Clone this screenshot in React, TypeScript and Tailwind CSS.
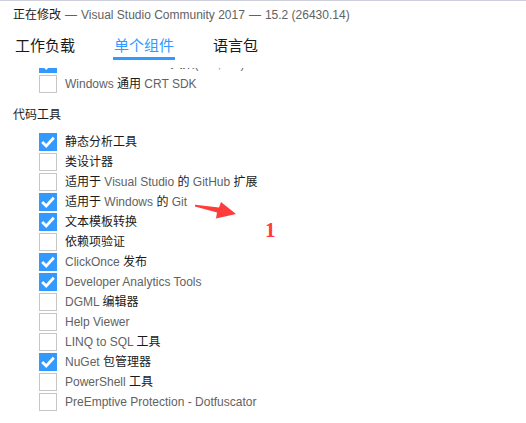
import React from 'react';

const FONT = { fontFamily: '"Liberation Sans", "Noto Sans CJK SC", sans-serif' };

interface Item {
  label: string;
  checked: boolean;
}

const items: Item[] = [
  { label: '静态分析工具', checked: true },
  { label: '类设计器', checked: false },
  { label: '适用于 Visual Studio 的 GitHub 扩展', checked: false },
  { label: '适用于 Windows 的 Git', checked: true },
  { label: '文本模板转换', checked: true },
  { label: '依赖项验证', checked: false },
  { label: 'ClickOnce 发布', checked: true },
  { label: 'Developer Analytics Tools', checked: true },
  { label: 'DGML 编辑器', checked: false },
  { label: 'Help Viewer', checked: false },
  { label: 'LINQ to SQL 工具', checked: false },
  { label: 'NuGet 包管理器', checked: true },
  { label: 'PowerShell 工具', checked: false },
  { label: 'PreEmptive Protection - Dotfuscator', checked: false },
];

// latin runs render lighter than the CJK ones in the original
const Mixed: React.FC<{ text: string }> = ({ text }) => {
  const parts = text.split(/([\u4e00-\u9fff]+)/).filter(Boolean);
  return (
    <>
      {parts.map((p, i) =>
        /[\u4e00-\u9fff]/.test(p) ? (
          <span key={i} className="text-[#1a1a1a]">{p}</span>
        ) : (
          <span key={i} className="text-[#626262]">{p}</span>
        )
      )}
    </>
  );
};

const CheckBox: React.FC<{ checked: boolean }> = ({ checked }) =>
  checked ? (
    <div className="w-[18px] h-[18px] bg-[#3399ff] flex items-center justify-center shrink-0">
      <svg width="18" height="18" viewBox="0 0 18 18">
        <path d="M3.2 9 L7.2 13 L14.8 4.8" fill="none" stroke="white" strokeWidth="2.8" />
      </svg>
    </div>
  ) : (
    <div className="w-[18px] h-[18px] border border-[#c6c6c6] bg-white shrink-0" />
  );

const Row: React.FC<{ item: Item; className?: string }> = ({ item, className = '' }) => (
  <div className={`h-[20px] flex items-center pl-[39px] gap-[8px] text-[12px] ${className}`}>
    <CheckBox checked={item.checked} />
    <span className="leading-[20px] whitespace-nowrap">
      <Mixed text={item.label} />
    </span>
  </div>
);

export default function App() {
  return (
    <div className="w-[526px] h-[423px] bg-white border-t border-[#cdd0dc] relative overflow-hidden flex flex-col" style={FONT}>
      <div className="h-[28px] flex items-center pl-[13px] text-[12px] whitespace-nowrap text-[#626262]">
        <span className="text-[#1a1a1a]">正在修改</span>
        <span className="mx-[4px]">—</span>
        <span>Visual Studio Community 2017</span>
        <span className="mx-[4px]">—</span>
        <span>15.2 (26430.14)</span>
      </div>

      <div className="flex pl-[15px] gap-[39px] pt-[7px] text-[15px] leading-[20px]">
        <div className="flex flex-col">
          <span className="text-[#1a1a1a]">工作负载</span>
          <div className="h-[3px] mt-[1px]" />
        </div>
        <div className="flex flex-col">
          <span className="text-[#3399ff]">单个组件</span>
          <div className="h-[3px] mt-[1px] bg-[#3399ff] -ml-[1px] -mr-[1px]" />
        </div>
        <div className="flex flex-col">
          <span className="text-[#1a1a1a]">语言包</span>
          <div className="h-[3px] mt-[1px]" />
        </div>
      </div>

      <div className="mt-[8px] flex-1 overflow-hidden flex flex-col">
        <Row item={{ label: 'VC++ 2017 v141 工具集(x86,x64)', checked: true }} className="-mt-[14px]" />
        <Row item={{ label: 'Windows 通用 CRT SDK', checked: false }} />

        <div className="pl-[13px] pt-[11px] pb-[7px] h-[38px] text-[12px] leading-[20px] text-[#1a1a1a]">代码工具</div>

        {items.map((it) => (
          <Row key={it.label} item={it} />
        ))}
      </div>

      {/* annotation */}
      <svg className="absolute left-[190px] top-[198px]" width="50" height="22" viewBox="0 0 50 22">
        <polygon points="5,5.8 29,8.6 31,3 46,15 26,19.5 27,13.4 5,7.4" fill="#ff3b3b" />
      </svg>
      <span
        className="absolute left-[265px] top-[217px] text-[21px] leading-[24px] font-bold text-[#ff3b3b]"
        style={{ fontFamily: '"Liberation Serif", serif' }}
      >
        1
      </span>
    </div>
  );
}
